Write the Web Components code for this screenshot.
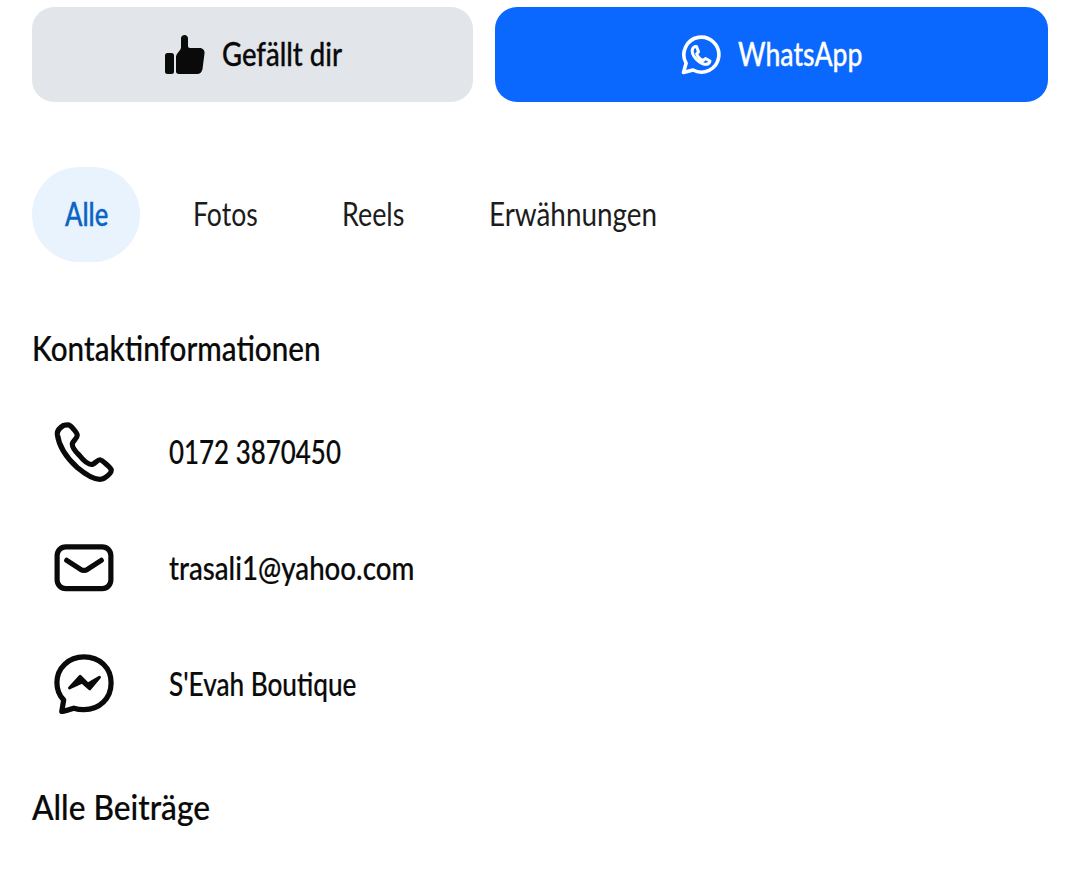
<!DOCTYPE html>
<html lang="de"><head><meta charset="utf-8"><title>Profil</title>
<style>
html,body{margin:0;padding:0;background:#fff}
body{font-family:Lato,"Liberation Sans",sans-serif;color:#0a0a0a}
</style></head><body>
<template id="t-t"><style>
:host{display:inline-block;width:var(--w);white-space:nowrap}
span{display:inline-block;transform:translateY(-1px) scaleX(var(--sx,1));transform-origin:0 50%}
</style><span><slot></slot></span></template>
<template id="t-btn"><style>
:host{display:flex;align-items:center;justify-content:center;height:95px;border-radius:22px;gap:17px;font-size:32px;font-weight:500;-webkit-text-stroke:.3px currentColor;background:var(--bg);color:var(--fg);min-width:0}
::slotted(svg){display:block;flex:none}
</style><slot name="icon"></slot><slot></slot></template>
<template id="t-tab"><style>
:host{display:flex;align-items:center;justify-content:center;height:95px;font-size:32px;color:#1c1c1c}
:host([active]){background:#e8f3fd;color:#0b63c4;border-radius:48px;font-weight:500;-webkit-text-stroke:.4px currentColor;width:108px}
</style><slot></slot></template>
<template id="t-head"><style>
:host{display:block;font-size:35px;font-weight:500;line-height:40px;-webkit-text-stroke:.2px currentColor;color:#0a0a0a}
</style><slot></slot></template>
<template id="t-row"><style>
:host{display:flex;align-items:center;height:64px;font-size:32px;font-weight:500;-webkit-text-stroke:.2px currentColor}
.i{width:137px;flex:none;padding-left:22px;box-sizing:border-box;display:flex}
::slotted(svg){display:block}
</style><div class="i"><slot name="icon"></slot></div><slot></slot></template>
<template id="t-page"><style>
:host{display:block;padding:7px 20px 0 32px;width:1068px;box-sizing:border-box}
.btns{display:grid;grid-template-columns:441px 553px;gap:22px}
.tabs{display:flex;margin-top:65px;gap:85px}
.h1{margin-top:66px}
.rows{display:flex;flex-direction:column;gap:52px;margin-top:52px}
.h2{margin-top:71px}
</style>
<div class="btns"><slot name="btn"></slot></div>
<div class="tabs"><slot name="tab"></slot></div>
<div class="h1"><slot name="h1"></slot></div>
<div class="rows"><slot name="row"></slot></div>
<div class="h2"><slot name="h2"></slot></div>
</template>
<x-page>
<x-btn slot="btn" style="--bg:#e2e5ea;--fg:#0a0a0a">
<svg slot="icon" width="41" height="40" viewBox="0 0 41 40"><rect x="1" y="18" width="9" height="21" rx="2.500" fill="#0a0a0a"/><path d="M12 36.500V22c0-2 1-3 2.500-5l1.500-2c.8-1 1-2 1-3.500v-8C17 1.500 18.500 0 20.500 0s3.500 1.500 3.500 3.500V11c0 1.300.8 2 2 2h9.500c3.500 0 5.500 2.500 5 5.500l-2 15.500c-.5 3-2.500 5-5.500 5H15c-2 0-3-1-3-2.500z" fill="#0a0a0a"/></svg>
<x-t style="--w:120px;--sx:.86">Gefällt dir</x-t></x-btn>
<x-btn slot="btn" style="--bg:#0b68ff;--fg:#fff">
<svg slot="icon" width="40" height="40" viewBox="0 0 40 40" fill="none" stroke="#fff" stroke-width="3.600" stroke-linejoin="round"><path d="M2.500 37.500l2.600-9.300A17.500 17.500 0 1 1 12 35z"/><path d="M14 11.500c-1.600.7-3 2.500-2.800 5 .4 5 6.400 11.600 12.200 12.700 2.800.5 5-1 5.600-3.200l-4.500-2.500-2.200 2c-3-1-5.500-3.700-6.600-6.500l1.800-2.200-2-5.300z" stroke-width="3"/></svg>
<x-t style="--w:125px;--sx:.83">WhatsApp</x-t></x-btn>
<x-tab slot="tab" active><x-t style="--w:43px;--sx:.8">Alle</x-t></x-tab>
<x-tab slot="tab" style="margin-left:-32px"><x-t style="--w:64px;--sx:.83">Fotos</x-t></x-tab>
<x-tab slot="tab"><x-t style="--w:62px;--sx:.84">Reels</x-t></x-tab>
<x-tab slot="tab"><x-t style="--w:166px;--sx:.87">Erwähnungen</x-t></x-tab>
<x-head slot="h1"><x-t style="--w:287px;--sx:.847">Kontaktinformationen</x-t></x-head>
<x-row slot="row"><svg slot="icon" width="60" height="62" viewBox="0 0 62 62" fill="none" stroke="#0a0a0a" stroke-width="5.400" stroke-linejoin="round" stroke-linecap="round"><path d="M10 3.500c-3.500 2-7 5-6.500 9.500C5 24 12 36 24 47c9 7.500 21 15 28 11 3-2 8-6 7-9-.6-1.800-9.500-9.800-11.500-10-2.500-.2-5 4-8 4.800-3.500.8-8-2.700-13.500-9.500-5-5-7.500-9-7-12 .6-3 5-5 5-8.500C24 11 17 3 14.500 3c-1.500 0-3 0-4.500.5z"/></svg><x-t style="--w:172px;--sx:.81">0172 3870450</x-t></x-row>
<x-row slot="row"><svg slot="icon" width="60" height="48" viewBox="0 0 62 50" fill="none" stroke="#0a0a0a" stroke-width="5.400" stroke-linejoin="round" stroke-linecap="round"><rect x="3" y="3" width="56" height="43.500" rx="9"/><path d="M13 17l14.500 9.500c2.500 1.500 4.500 1.500 7 0L49 17"/></svg><x-t style="--w:244px;--sx:.865">trasali1@yahoo.com</x-t></x-row>
<x-row slot="row"><svg slot="icon" width="60" height="60" viewBox="0 0 62 62" fill="none" stroke="#0a0a0a" stroke-width="5.400" stroke-linejoin="round" stroke-linecap="round"><path d="M31 3C15 3 3 14.500 3 29.500c0 7 2.500 13.500 7 18l-2 12c4-.5 8-2 12.500-3.500 3 1 6.500 1.500 10.500 1.500 16 0 28-11.500 28-27.500S47 3 31 3z"/><path d="M16 35l11-12 8 8 12-7-10 12-8-7z" fill="#0a0a0a" stroke-width="3"/></svg><x-t style="--w:187px;--sx:.817">S'Evah Boutique</x-t></x-row>
<x-head slot="h2"><x-t style="--w:177px;--sx:.905">Alle Beiträge</x-t></x-head>
</x-page>
<script>
function reg(name,id){customElements.define(name,class extends HTMLElement{constructor(){super();this.attachShadow({mode:'open'}).appendChild(document.getElementById(id).content.cloneNode(true))}})}
reg('x-page','t-page');reg('x-btn','t-btn');reg('x-tab','t-tab');reg('x-head','t-head');reg('x-row','t-row');reg('x-t','t-t');
</script>
</body></html>
